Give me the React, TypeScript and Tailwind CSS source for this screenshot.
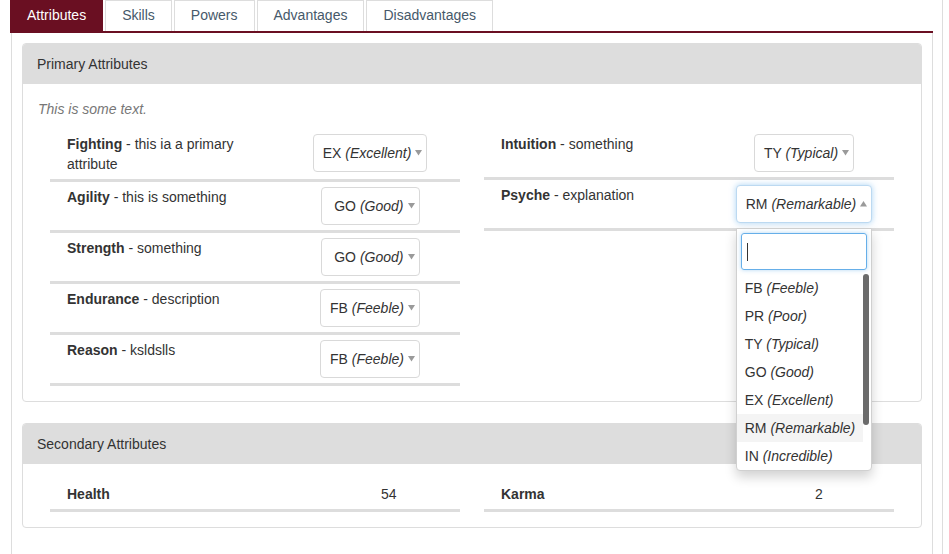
import React from "react";

type Attr = { name: string; desc: string; code: string; label: string; open?: boolean };

const left: Attr[] = [
  { name: "Fighting", desc: "this ia a primary attribute", code: "EX", label: "Excellent" },
  { name: "Agility", desc: "this is something", code: "GO", label: "Good" },
  { name: "Strength", desc: "something", code: "GO", label: "Good" },
  { name: "Endurance", desc: "description", code: "FB", label: "Feeble" },
  { name: "Reason", desc: "ksldslls", code: "FB", label: "Feeble" },
];

const right: Attr[] = [
  { name: "Intuition", desc: "something", code: "TY", label: "Typical" },
  { name: "Psyche", desc: "explanation", code: "RM", label: "Remarkable", open: true },
];

const ranks = [
  ["FB", "Feeble"],
  ["PR", "Poor"],
  ["TY", "Typical"],
  ["GO", "Good"],
  ["EX", "Excellent"],
  ["RM", "Remarkable"],
  ["IN", "Incredible"],
];

const tabs = ["Attributes", "Skills", "Powers", "Advantages", "Disadvantages"];

const Caret = ({ up }: { up?: boolean }) => (
  <svg width="7" height="6" viewBox="0 0 7 6" className="shrink-0">
    <path d={up ? "M0 5.5 L3.5 0 L7 5.5 Z" : "M0 0 L7 0 L3.5 5.5 Z"} fill="#9a9a9a" />
  </svg>
);

const Select = ({ code, label, open }: { code: string; label: string; open?: boolean }) => (
  <div className="relative">
    <div
      className={
        "flex h-[38px] min-w-[99px] items-center justify-end gap-[4px] rounded-[4px] border bg-white pl-[9px] pr-[4px] leading-5 whitespace-nowrap " +
        (open
          ? "border-[#bcd9f1] shadow-[0_0_6px_rgba(102,175,233,0.55)]"
          : "border-[#d9d9d9]")
      }
    >
      <span>
        {code} <i>({label})</i>
      </span>
      <Caret up={open} />
    </div>
    {open && (
      <div className="absolute left-0 top-full z-10 mt-[5px] w-[136px] rounded-b-[4px] border border-[#d0d0d0] bg-white shadow-[0_6px_12px_rgba(0,0,0,0.18)]">
        <div className="p-[4px]">
          <div className="flex h-[37px] items-center rounded-[3px] border border-[#66afe9] px-[5px] shadow-[0_0_4px_rgba(102,175,233,0.5)]">
            <div className="h-[18px] w-px bg-[#333]" />
          </div>
        </div>
        <div className="flex">
          <ul className="flex-1">
            {ranks.map(([c, l]) => (
              <li
                key={c}
                className={
                  "h-[28px] px-[8px] leading-[28px] whitespace-nowrap " +
                  (c === code ? "bg-[#f4f4f4]" : "")
                }
              >
                {c} <i>({l})</i>
              </li>
            ))}
          </ul>
          <div className="w-[8px] pr-[1px]">
            <div className="h-[151px] w-[6px] rounded-[3px] bg-[#6b6b6b]" />
          </div>
        </div>
      </div>
    )}
  </div>
);

const AttrRow = ({ a, wrapLabel }: { a: Attr; wrapLabel?: boolean }) => (
  <div className="flex items-start border-b-[3px] border-[#dddddd] py-[5px] pl-[17px] pr-[20px]">
    <div className={"w-[233px] leading-5 " + (wrapLabel ? "pr-[30px]" : "")}>
      <b>{a.name}</b> - {a.desc}
    </div>
    <div className="flex w-[140px] justify-center">
      <Select code={a.code} label={a.label} open={a.open} />
    </div>
  </div>
);

const Panel = ({ title, children }: { title: string; children: React.ReactNode }) => (
  <div className="rounded-[4px] border border-[#dddddd]">
    <div className="rounded-t-[3px] bg-[#dddddd] px-[14px] py-[10px] leading-5">{title}</div>
    <div className="px-[15px] pb-[15px] pt-[15px]">{children}</div>
  </div>
);

const App = () => {
  return (
    <div className="min-h-[554px] w-[943px] border-r border-[#dddddd] bg-white pl-[10px] pr-[9px] text-[14px] text-[#333] [font-family:'Liberation_Sans',Arial,sans-serif]">
      <ul className="flex border-b-2 border-[#6a0f22]">
        {tabs.map((t, i) => (
          <li
            key={t}
            className={
              "mr-[2px] h-[31px] border border-b-0 px-[16px] pb-[6px] pt-[4px] leading-5 " +
              (i === 0
                ? "border-[#6a0f22] bg-[#6a0f22] text-white"
                : "border-[#dddddd] text-[#46596a]")
            }
          >
            {t}
          </li>
        ))}
      </ul>
      <div className="ml-px min-h-[521px] border-x border-[#dddddd] px-[10px] pt-[10px]">
        <div className="mb-[21px]">
          <Panel title="Primary Attributes">
            <p className="mb-[10px] leading-5 italic text-[#777]">This is some text.</p>
            <div className="mx-[12px] grid grid-cols-2 items-start gap-x-[24px]">
              <div>
                {left.map((a, i) => (
                  <AttrRow key={a.name} a={a} wrapLabel={i === 0} />
                ))}
              </div>
              <div>
                {right.map((a) => (
                  <AttrRow key={a.name} a={a} />
                ))}
              </div>
            </div>
          </Panel>
        </div>
        <Panel title="Secondary Attributes">
          <div className="mx-[12px] grid grid-cols-2 gap-x-[24px]">
            {[
              ["Health", "54"],
              ["Karma", "2"],
            ].map(([n, v]) => (
              <div key={n} className="flex border-b-[3px] border-[#dddddd] py-[5px] pl-[17px] leading-5">
                <b className="w-[314px]">{n}</b>
                <span>{v}</span>
              </div>
            ))}
          </div>
        </Panel>
      </div>
    </div>
  );
};

export default App;
